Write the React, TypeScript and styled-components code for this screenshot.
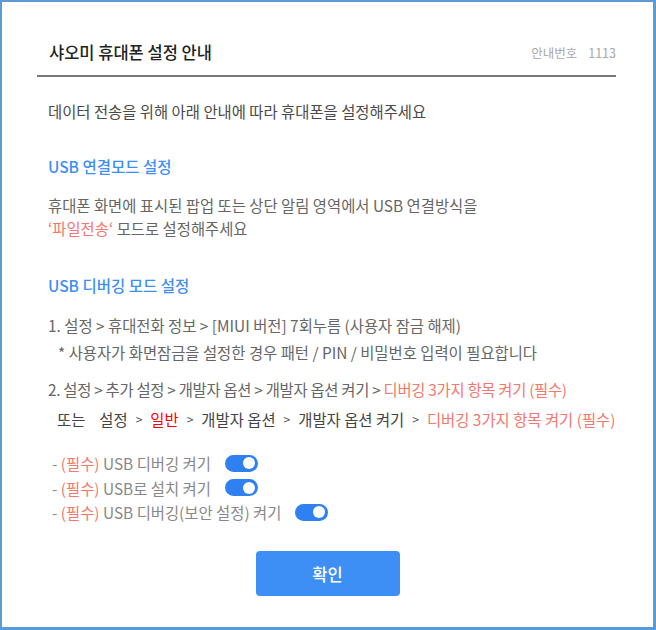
import styled, { createGlobalStyle } from 'styled-components';

const GlobalStyle = createGlobalStyle`
	html, body {
		margin: 0;
		padding: 0;
		background: #ffffff;
	}
	body {
		font-family: 'Noto Sans CJK KR', 'Noto Sans', sans-serif;
	}
`;

const switches = ['USB 디버깅 켜기', 'USB로 설치 켜기', 'USB 디버깅(보안 설정) 켜기'];

function App() {
	return (
		<>
			<GlobalStyle />
			<Frame>
				<Header>
					<Title>샤오미 휴대폰 설정 안내</Title>
					<GuideNo>
						안내번호<span>1113</span>
					</GuideNo>
				</Header>

				<Body>
					<Intro>데이터 전송을 위해 아래 안내에 따라 휴대폰을 설정해주세요</Intro>

					<SectionTitle>USB 연결모드 설정</SectionTitle>
					<Paragraph>
						휴대폰 화면에 표시된 팝업 또는 상단 알림 영역에서 USB 연결방식을
						<br />
						<Accent>‘파일전송‘</Accent> 모드로 설정해주세요
					</Paragraph>

					<SectionTitle $gap={34}>USB 디버깅 모드 설정</SectionTitle>
					<Step>1. 설정 &gt; 휴대전화 정보 &gt; [MIUI 버전] 7회누름 (사용자 잠금 해제)</Step>
					<Note>* 사용자가 화면잠금을 설정한 경우 패턴 / PIN / 비밀번호 입력이 필요합니다</Note>
					<Step $gap={15} $tight>
						2. 설정 &gt; 추가 설정 &gt; 개발자 옵션 &gt; 개발자 옵션 켜기 &gt;{' '}
						<Accent>디버깅 3가지 항목 켜기 (필수)</Accent>
					</Step>
					<AltPath>
						<span>또는</span>
						<span>설정</span>
						<Arrow>&gt;</Arrow>
						<Strong>일반</Strong>
						<Arrow>&gt;</Arrow>
						<span>개발자 옵션</span>
						<Arrow>&gt;</Arrow>
						<span>개발자 옵션 켜기</span>
						<Arrow>&gt;</Arrow>
						<Accent>디버깅 3가지 항목 켜기 (필수)</Accent>
					</AltPath>

					<SwitchList>
						{switches.map((label) => (
							<SwitchRow key={label}>
								<span>
									- <Accent>(필수)</Accent> {label}
								</span>
								<Toggle />
							</SwitchRow>
						))}
					</SwitchList>
				</Body>

				<Footer>
					<ConfirmButton>확인</ConfirmButton>
				</Footer>
			</Frame>
		</>
	);
}

export default App;

const Frame = styled.div`
	width: 656px;
	height: 630px;
	box-sizing: border-box;
	border-style: solid;
	border-color: #5b9bd5;
	border-width: 2px 3px 3px 2px;
	background: #ffffff;
	display: flex;
	flex-direction: column;
`;

const Header = styled.div`
	margin: 38px 37px 0 35px;
	padding: 0 0 10px 12px;
	border-bottom: 2px solid #7a7a7a;
	display: flex;
	align-items: center;
	justify-content: space-between;
`;

const Title = styled.h1`
	margin: 0;
	font-size: 16.5px;
	line-height: 25px;
	font-weight: 500;
	color: #222222;
`;

const GuideNo = styled.div`
	font-size: 12.5px;
	color: #a8a8a8;

	span {
		margin-left: 11px;
	}
`;

const Body = styled.div`
	padding: 0 0 0 46px;
	font-size: 15.4px;
	color: #666666;
`;

const Intro = styled.p`
	margin: 23px 0 0;
	line-height: 22px;
	color: #4a4a4a;
`;

const SectionTitle = styled.h2<{ $gap?: number }>`
	margin: ${(p) => p.$gap ?? 33}px 0 0;
	font-size: 15.5px;
	line-height: 22px;
	font-weight: 500;
	color: #3d8ef5;
`;

const Paragraph = styled.p`
	margin: 17px 0 0;
	line-height: 23px;
`;

const Accent = styled.span`
	color: #f6776d;
`;

const Step = styled.p<{ $gap?: number; $tight?: boolean }>`
	margin: ${(p) => p.$gap ?? 18}px 0 0;
	line-height: 22px;
	letter-spacing: ${(p) => (p.$tight ? '-0.3px' : '0')};
`;

const Note = styled.p`
	margin: 5px 0 0 10px;
	line-height: 22px;
`;

const AltPath = styled.div`
	margin: 8px 0 0 9px;
	line-height: 22px;
	display: flex;
	align-items: center;
	gap: 8px;
	color: #444444;

	& > span:first-child {
		margin-right: 6px;
	}
`;

const Arrow = styled.span`
	font-size: 12px;
	color: #555555;
`;

const Strong = styled.span`
	color: #ff0000;
`;

const SwitchList = styled.div`
	margin: 22px 0 0 4px;
	display: flex;
	flex-direction: column;
	gap: 2px;
	color: #888888;
`;

const SwitchRow = styled.div`
	display: flex;
	align-items: center;
	gap: 14px;
	line-height: 22.5px;
`;

const Toggle = styled.span`
	position: relative;
	width: 33px;
	height: 17px;
	border-radius: 9px;
	background: #2f80f0;

	&::after {
		content: '';
		position: absolute;
		top: 2.5px;
		right: 3px;
		width: 12px;
		height: 12px;
		border-radius: 50%;
		background: #ffffff;
	}
`;

const Footer = styled.div`
	margin-top: auto;
	padding: 0 0 31px;
	display: flex;
	justify-content: center;
`;

const ConfirmButton = styled.button`
	width: 144px;
	height: 45px;
	border: 0;
	border-radius: 4px;
	background: #3d8ef5;
	color: #ffffff;
	font-family: inherit;
	font-size: 16.5px;
	font-weight: 500;
`;
